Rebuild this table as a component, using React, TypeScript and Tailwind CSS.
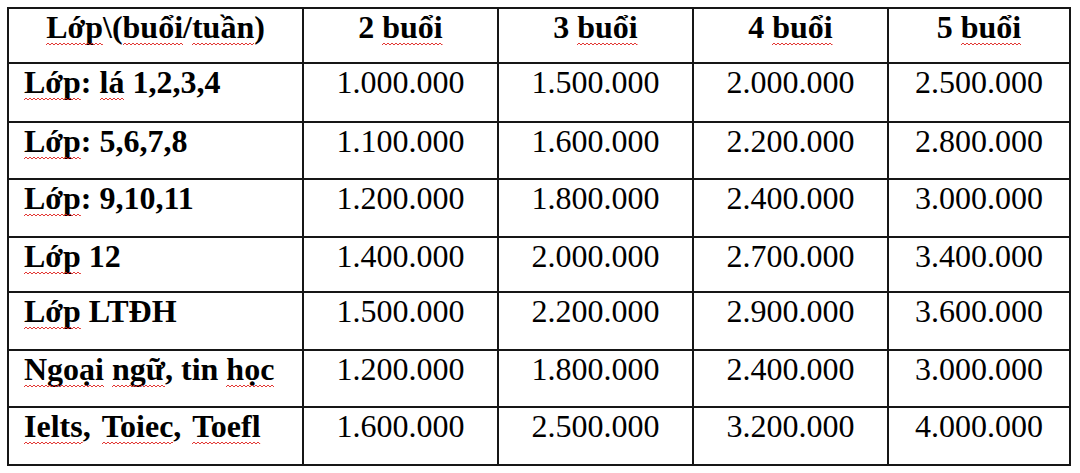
import React from 'react'

// spell-check style squiggle under a word (drawn, sits just under the baseline)
function Sq({ children }: { children: React.ReactNode }) {
  return (
    <span className="relative inline-block">
      {children}
      <svg className="absolute left-0 -bottom-px w-full h-[4px] pointer-events-none" aria-hidden>
        <defs>
          <pattern id="sq" width="4" height="4" patternUnits="userSpaceOnUse">
            <path d="M0 3 L2 1 L4 3" fill="none" stroke="#e0201c" strokeWidth="0.9" />
          </pattern>
        </defs>
        <rect width="100%" height="4" fill="url(#sq)" />
      </svg>
    </span>
  )
}

const heads = ['2', '3', '4', '5']

const rows: { label: React.ReactNode; prices: string[]; h: string }[] = [
  {
    label: (
      <>
        <Sq>Lớp</Sq>: <Sq>lá</Sq> 1,2,3,4
      </>
    ),
    prices: ['1.000.000', '1.500.000', '2.000.000', '2.500.000'],
    h: 'h-[59px]',
  },
  {
    label: (
      <>
        <Sq>Lớp</Sq>: 5,6,7,8
      </>
    ),
    prices: ['1.100.000', '1.600.000', '2.200.000', '2.800.000'],
    h: 'h-[57px]',
  },
  {
    label: (
      <>
        <Sq>Lớp</Sq>: 9,10,11
      </>
    ),
    prices: ['1.200.000', '1.800.000', '2.400.000', '3.000.000'],
    h: 'h-[58px]',
  },
  {
    label: (
      <>
        <Sq>Lớp</Sq> 12
      </>
    ),
    prices: ['1.400.000', '2.000.000', '2.700.000', '3.400.000'],
    h: 'h-[55px]',
  },
  {
    label: (
      <>
        <Sq>Lớp</Sq> LTĐH
      </>
    ),
    prices: ['1.500.000', '2.200.000', '2.900.000', '3.600.000'],
    h: 'h-[58px]',
  },
  {
    label: (
      <>
        <Sq>Ngoại</Sq> <Sq>ngữ</Sq>, tin <Sq>học</Sq>
      </>
    ),
    prices: ['1.200.000', '1.800.000', '2.400.000', '3.000.000'],
    h: 'h-[57px]',
  },
  {
    label: (
      <span className="[word-spacing:3px]">
        <Sq>Ielts</Sq>, <Sq>Toiec</Sq>, <Sq>Toefl</Sq>
      </span>
    ),
    prices: ['1.600.000', '2.500.000', '3.200.000', '4.000.000'],
    h: 'h-[58px]',
  },
]

const cell = 'border-r-2 border-b-2 border-[#161616] leading-[36px]'

export default function App() {
  return (
    <div className="w-[1080px] h-[473px] bg-white overflow-hidden text-black font-['Liberation_Serif','Times_New_Roman',serif] text-[32px]">
      <div className="ml-[7px] mt-[7px] w-max grid grid-cols-[295px_195px_195px_195px_182px] border-l-2 border-t-2 border-[#161616]">
        {/* header */}
        <div className={`${cell} h-[55px] font-bold text-center`}>
          <Sq>Lớp</Sq>\(<Sq>buổi</Sq>/<Sq>tuần</Sq>)
        </div>
        {heads.map((n) => (
          <div key={n} className={`${cell} h-[55px] font-bold text-center`}>
            {n} <Sq>buổi</Sq>
          </div>
        ))}

        {rows.map((r, i) => (
          <React.Fragment key={i}>
            <div className={`${cell} ${r.h} font-bold pl-[15px] whitespace-nowrap`}>{r.label}</div>
            {r.prices.map((p, j) => (
              <div key={j} className={`${cell} ${r.h} text-center`}>
                {p}
              </div>
            ))}
          </React.Fragment>
        ))}
      </div>
    </div>
  )
}
